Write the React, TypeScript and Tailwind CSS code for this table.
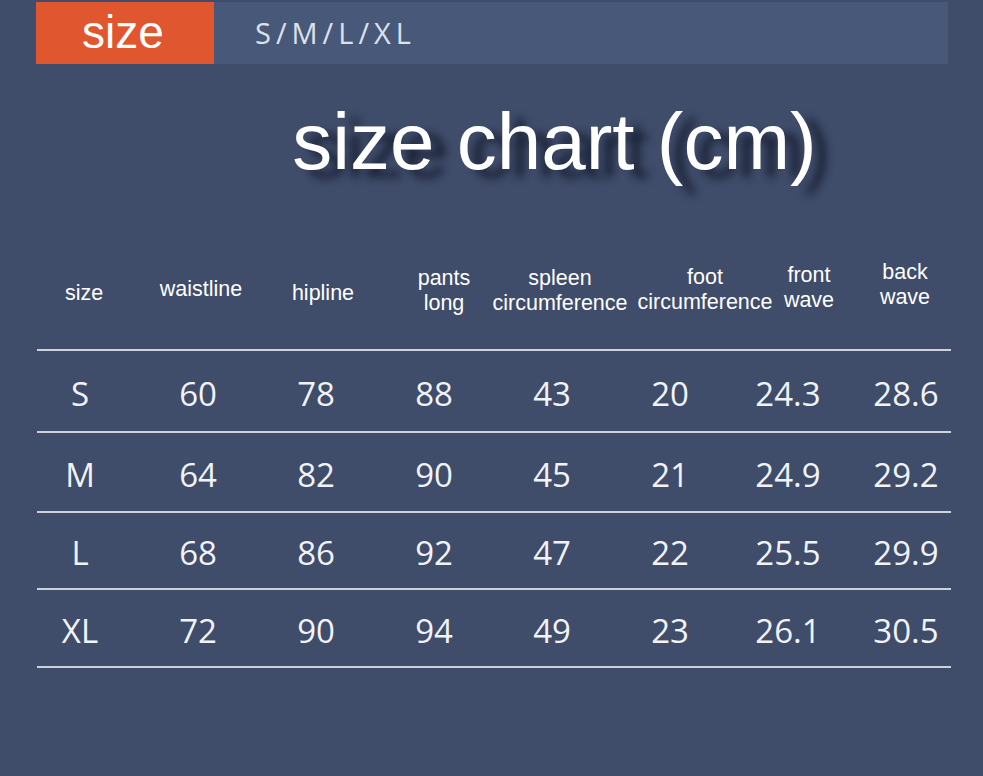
import React from 'react';

const headers = [
    { lines: ['size'], cls: 'translate-x-[4px] translate-y-[3px]' },
    { lines: ['waistline'], cls: 'translate-x-[3px] -translate-y-[1px]' },
    { lines: ['hipline'], cls: 'translate-x-[7px] translate-y-[3px]' },
    { lines: ['pants', 'long'], cls: 'translate-x-[10px] translate-y-[1px]' },
    { lines: ['spleen', 'circumference'], cls: 'translate-x-[8px] translate-y-[1px]' },
    { lines: ['foot', 'circumference'], cls: 'translate-x-[35px]' },
    { lines: ['front', 'wave'], cls: 'translate-x-[21px] -translate-y-[2px]' },
    { lines: ['back', 'wave'], cls: '-translate-x-[1px] -translate-y-[5px]' },
];

const rows = [
    { h: 'h-[82px]', cells: ['S', '60', '78', '88', '43', '20', '24.3', '28.6'] },
    { h: 'h-[80px]', cells: ['M', '64', '82', '90', '45', '21', '24.9', '29.2'] },
    { h: 'h-[77px]', cells: ['L', '68', '86', '92', '47', '22', '25.5', '29.9'] },
    { h: 'h-[78px]', cells: ['XL', '72', '90', '94', '49', '23', '26.1', '30.5'] },
];

export default function App() {
    return (
        <div className="w-[983px] h-[776px] bg-[#3f4c6a] overflow-hidden pt-[2px]">
            {/* top bar */}
            <div className="ml-[36px] w-[912px] h-[62px] flex bg-[#485879]">
                <div className="w-[178px] h-full bg-[#e0562f] flex items-center justify-center pr-[4px]">
                    <span className="text-white text-[46px] leading-none font-['Liberation_Sans',sans-serif] -translate-y-[1px]">size</span>
                </div>
                <div className="flex items-center pl-[41px]">
                    <span className="text-[#dde1e8] text-[29px] tracking-[5px] font-['Open_Sans',sans-serif]">S/M/L/XL</span>
                </div>
            </div>

            {/* title */}
            <div className="mt-[38px] h-[80px] flex justify-center pl-[126px]">
                <h1 className="text-white text-[80px] leading-[80px] font-['Liberation_Sans',sans-serif] [text-shadow:14px_8px_8px_rgba(10,15,30,0.75)]">
                    size chart (cm)
                </h1>
            </div>

            {/* table header */}
            <div className="mt-[49px] h-[118px] ml-[21px] grid grid-cols-[repeat(8,118px)] items-center">
                {headers.map((col) => (
                    <div key={col.lines.join(' ')} className={`flex flex-col items-center justify-center text-white text-[21.5px] leading-[25px] whitespace-nowrap font-['Liberation_Sans',sans-serif] ${col.cls}`}>
                        {col.lines.map((l) => (
                            <span key={l}>{l}</span>
                        ))}
                    </div>
                ))}
            </div>

            {/* table body */}
            <div className="ml-[37px] w-[914px] border-t-2 border-[#cdd1d9]">
                {rows.map((row) => (
                    <div key={row.cells[0]} className={`${row.h} border-b-2 border-[#cdd1d9] flex items-center pt-[4px]`}>
                        <div className="-ml-[16px] grid grid-cols-[repeat(8,118px)]">
                            {row.cells.map((c, i) => (
                                <div key={i} className="flex justify-center text-[#f1f3f6] text-[33px] font-['Open_Sans',sans-serif] font-medium leading-none">
                                    {c}
                                </div>
                            ))}
                        </div>
                    </div>
                ))}
            </div>
        </div>
    );
}
